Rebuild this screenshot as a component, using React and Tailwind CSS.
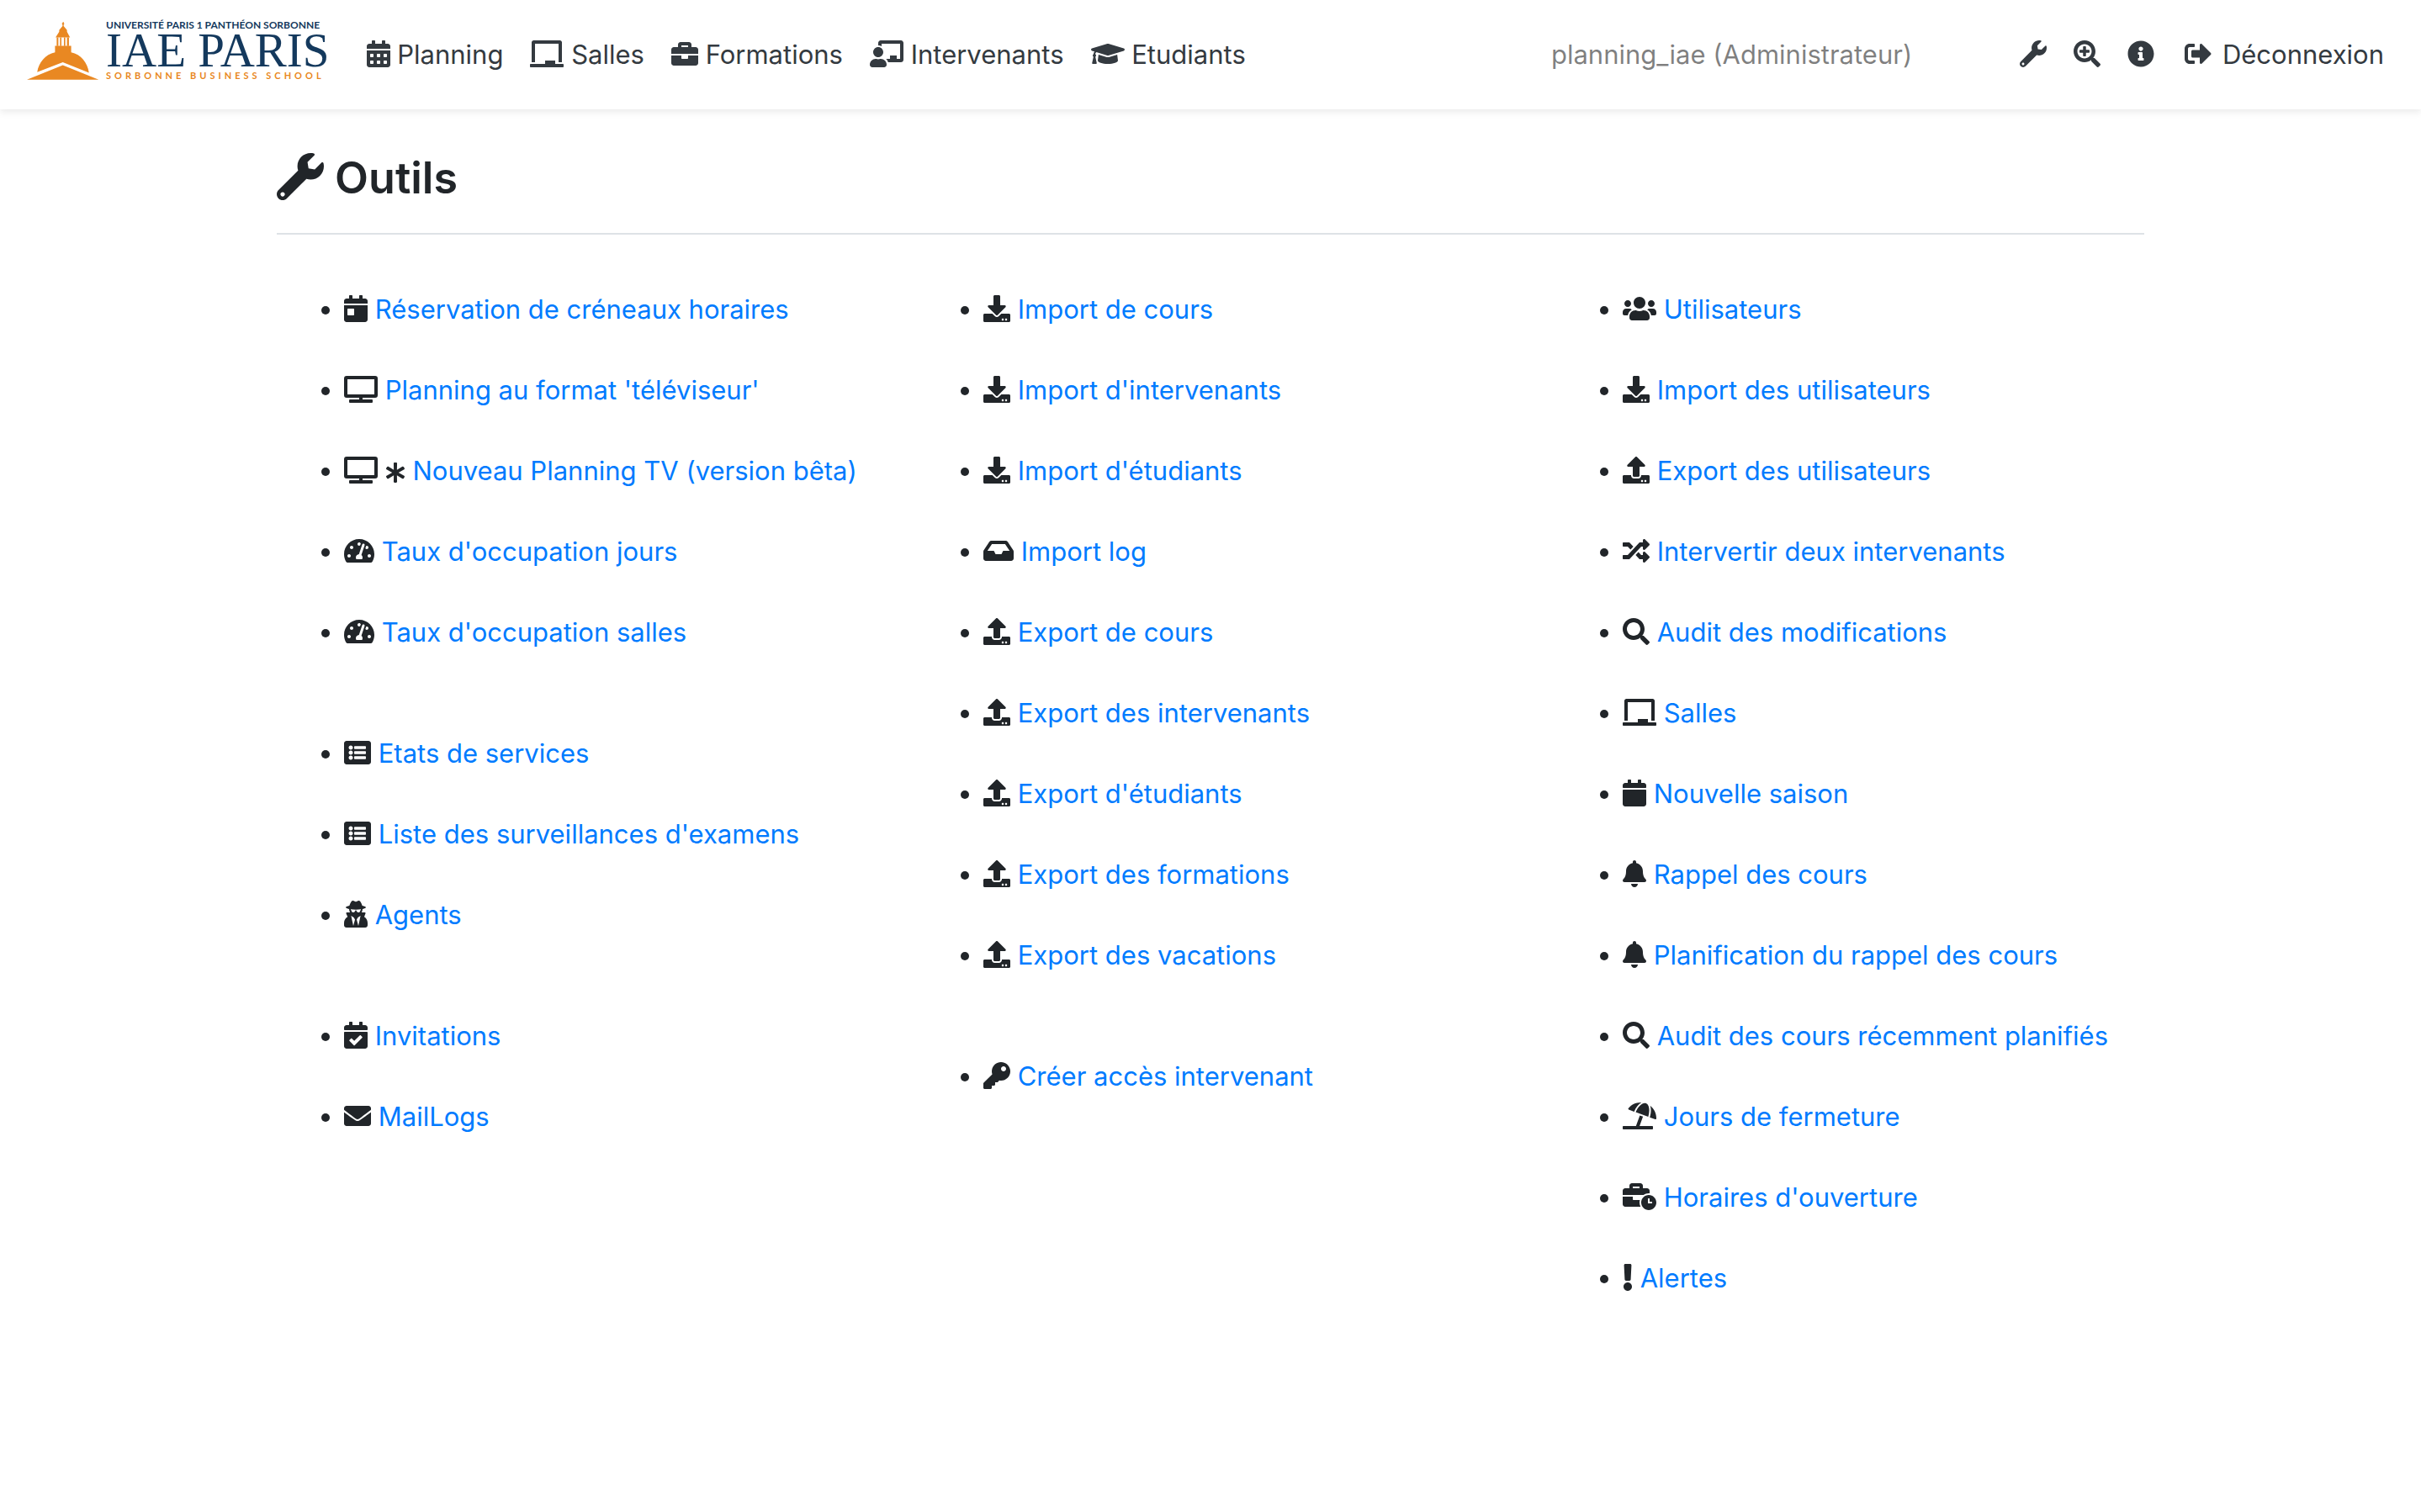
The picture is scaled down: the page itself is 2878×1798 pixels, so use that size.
import React from "react";
import {
  FaAsterisk, FaBell, FaBriefcase, FaBusinessTime, FaCalendar, FaCalendarAlt, FaCalendarCheck, FaCalendarDay,
  FaChalkboard, FaChalkboardTeacher, FaDownload, FaEnvelope, FaExclamation, FaGraduationCap, FaInbox,
  FaInfoCircle, FaKey, FaListAlt, FaRandom, FaSearch, FaSearchPlus, FaSignOutAlt, FaTachometerAlt, FaTv,
  FaUmbrellaBeach, FaUpload, FaUsers, FaUserSecret, FaWrench,
} from "react-icons/fa";

// Icon boxes: one text line high, with the width that each glyph's drawing needs.
const XS = "inline h-8 w-3 align-[-4px]";
const SM = "inline h-8 w-7 align-[-4px]";
const MD = "inline h-8 w-8 align-[-4px]";
const LG = "inline h-8 w-9 align-[-4px]";
const XL = "inline h-8 w-10 align-[-4px]";

const NAV = [
  [FaCalendarAlt, SM, "Planning"],
  [FaChalkboard, XL, "Salles"],
  [FaBriefcase, MD, "Formations"],
  [FaChalkboardTeacher, XL, "Intervenants"],
  [FaGraduationCap, XL, "Etudiants"],
];

const SHORTCUTS = [
  [FaWrench, "Outils"],
  [FaSearchPlus, "Recherche"],
  [FaInfoCircle, "Informations"],
];

// Each column is a list of groups; each group is a list of [icon, size, label].
const COLUMNS = [
  [
    [
      [FaCalendarDay, SM, "Réservation de créneaux horaires"],
      [FaTv, XL, "Planning au format 'téléviseur'"],
      [FaTv, XL, "Nouveau Planning TV (version bêta)", true],
      [FaTachometerAlt, LG, "Taux d'occupation jours"],
      [FaTachometerAlt, LG, "Taux d'occupation salles"],
    ],
    [
      [FaListAlt, MD, "Etats de services"],
      [FaListAlt, MD, "Liste des surveillances d'examens"],
      [FaUserSecret, SM, "Agents"],
    ],
    [
      [FaCalendarCheck, SM, "Invitations"],
      [FaEnvelope, MD, "MailLogs"],
    ],
  ],
  [
    [
      [FaDownload, MD, "Import de cours"],
      [FaDownload, MD, "Import d'intervenants"],
      [FaDownload, MD, "Import d'étudiants"],
      [FaInbox, LG, "Import log"],
      [FaUpload, MD, "Export de cours"],
      [FaUpload, MD, "Export des intervenants"],
      [FaUpload, MD, "Export d'étudiants"],
      [FaUpload, MD, "Export des formations"],
      [FaUpload, MD, "Export des vacations"],
    ],
    [[FaKey, MD, "Créer accès intervenant"]],
  ],
  [
    [
      [FaUsers, XL, "Utilisateurs"],
      [FaDownload, MD, "Import des utilisateurs"],
      [FaUpload, MD, "Export des utilisateurs"],
      [FaRandom, MD, "Intervertir deux intervenants"],
      [FaSearch, MD, "Audit des modifications"],
      [FaChalkboard, XL, "Salles"],
      [FaCalendar, SM, "Nouvelle saison"],
      [FaBell, SM, "Rappel des cours"],
      [FaBell, SM, "Planification du rappel des cours"],
      [FaSearch, MD, "Audit des cours récemment planifiés"],
      [FaUmbrellaBeach, XL, "Jours de fermeture"],
      [FaBusinessTime, XL, "Horaires d'ouverture"],
      [FaExclamation, XS, "Alertes"],
    ],
  ],
];

function Logo() {
  return (
    <a href="#" className="flex shrink-0 gap-2 pb-2.5 whitespace-nowrap">
      <svg viewBox="36 42 260 216" className="h-[72px] w-[86px]" fill="#e98822" aria-hidden="true">
        <path d="M36 255 165 203 294 255Z" />
        <path d="M73 228C78 194 102 164 137 157V133H195V157C230 164 254 194 259 230L165 192Z" />
        <path d="M143 103h6v31h-6zM155 103h5v31h-5zM169 103h5v31h-5zM180 103h7v31h-7z" />
        <path d="M139 103 152 83V77L164 62V58A4 4 0 1 1 168 58V62L180 77V83L191 103Z" />
        <path d="M165 47h3v8h-3z" />
      </svg>
      <span className="flex flex-col">
        <span className="font-[Lato,sans-serif] text-[12px] leading-[12px] font-bold text-[#14395d]">
          UNIVERSITÉ PARIS 1 PANTHÉON SORBONNE
        </span>
        <span className="font-['Liberation_Serif',serif] text-[57px] leading-[48px] text-[#14395d]">IAE PARIS</span>
        <span className="font-[Lato,sans-serif] text-[11px] leading-[12px] font-bold tracking-[4px] text-[#e98822]">
          SORBONNE BUSINESS SCHOOL
        </span>
      </span>
    </a>
  );
}

function Header() {
  return (
    <header className="flex items-center bg-white py-6 pr-7 pl-8 whitespace-nowrap text-[#343a40] shadow-[0_4px_8px_rgba(0,0,0,0.075)]">
      <Logo />
      <nav className="ml-7 flex grow items-center">
        {NAV.map(([Icon, size, label]) => (
          <a key={label} href="#" className="px-4">
            <Icon className={size} /> {label}
          </a>
        ))}
        <span className="mr-28 ml-auto text-black/50">planning_iae (Administrateur)</span>
        {SHORTCUTS.map(([Icon, label]) => (
          <a key={label} href="#" aria-label={label} className="px-4">
            <Icon className={MD} />
          </a>
        ))}
        <a href="#" className="px-4">
          <span className="inline-block w-10 text-center">
            <FaSignOutAlt className={MD} />
          </span>{" "}
          Déconnexion
        </a>
      </nav>
    </header>
  );
}

export default function App() {
  return (
    <div className="min-h-screen bg-white font-[Inter,sans-serif] text-[31px] leading-[48px] text-[#212529]">
      <Header />
      <main className="mx-auto max-w-[2280px] px-[30px] pt-12">
        <h1 className="border-b-2 border-[#dee2e6] pb-8 text-[52px] leading-[67px] font-semibold">
          <FaWrench className="inline h-14 w-14 align-[-8px]" /> Outils
        </h1>
        <div className="-mx-[30px] mt-[65px] grid grid-cols-3">
          {COLUMNS.map((groups, c) => (
            <div key={c} className="flex flex-col gap-24 px-[30px]">
              {groups.map((items, g) => (
                <ul key={g} className="flex list-disc flex-col gap-12 pl-20">
                  {items.map(([Icon, size, label, beta]) => (
                    <li key={label} className="whitespace-nowrap">
                      <Icon className={size} /> {beta && <FaAsterisk className="inline h-6 w-6 align-[-3px]" />}
                      {beta && " "}
                      <a href="#" className="text-[#007bff]">
                        {label}
                      </a>
                    </li>
                  ))}
                </ul>
              ))}
            </div>
          ))}
        </div>
      </main>
    </div>
  );
}
